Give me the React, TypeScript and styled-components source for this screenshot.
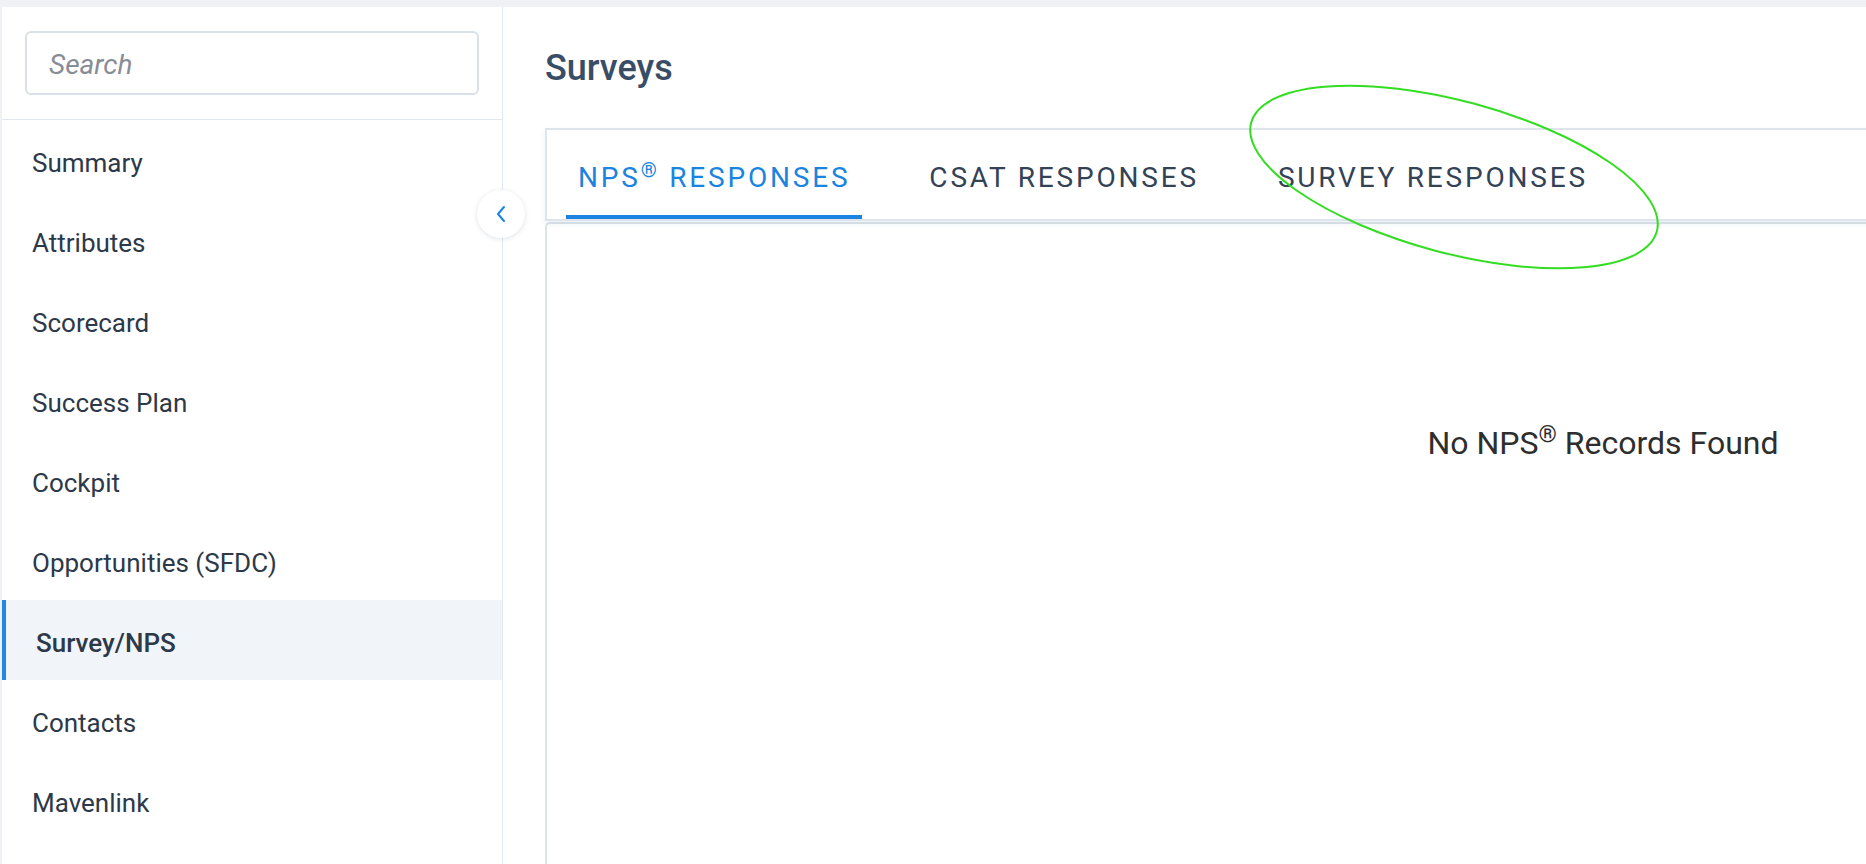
import styled, { createGlobalStyle } from "styled-components";

const GlobalStyle = createGlobalStyle`
    html, body {
        margin: 0;
        padding: 0;
        overflow: hidden;
        background: #eff1f5;
        font-family: Roboto, "Liberation Sans", sans-serif;
    }
    * {
        box-sizing: border-box;
    }
`;

const Page = styled.div`
    display: flex;
    align-items: stretch;
    width: max-content;
    min-height: 100vh;
    padding: 7px 0 0 2px;
    background: #eff1f5;
    position: relative;
`;

const Sidebar = styled.aside`
    position: relative;
    flex: none;
    width: 501px;
    background: #ffffff;
    border-right: 1px solid #e3e8ee;
`;

const SearchWrap = styled.div`
    padding: 24px 23px;
    border-bottom: 1px solid #e3e8ee;
`;

const SearchInput = styled.input`
    display: block;
    width: 100%;
    height: 64px;
    padding: 2px 22px 0;
    border: 2px solid #d9e0e8;
    border-radius: 6px;
    font-family: Roboto, "Liberation Sans", sans-serif;
    font-size: 28px;
    color: #2d3848;
    outline: none;
    &::placeholder {
        color: #878d96;
        font-style: italic;
    }
`;

const NavList = styled.ul`
    list-style: none;
    margin: 0;
    padding: 0;
`;

const NavItem = styled.li<{ $active?: boolean }>`
    display: flex;
    align-items: center;
    height: 80px;
    padding: 6px 0 0 30px;
    border-left: ${(p) => (p.$active ? "4px solid #1f87e5" : "none")};
    background: ${(p) => (p.$active ? "#f1f5f9" : "transparent")};
    font-size: 26px;
    font-weight: ${(p) => (p.$active ? 500 : 400)};
    color: #2d3848;
`;

const CollapseButton = styled.button`
    position: absolute;
    top: 183px;
    left: 475px;
    width: 48px;
    height: 48px;
    padding: 0;
    border: none;
    border-radius: 50%;
    background: #ffffff;
    box-shadow: 0 1px 5px rgba(30, 50, 80, 0.14);
    display: flex;
    align-items: center;
    justify-content: center;
    cursor: pointer;
    z-index: 2;
`;

const Main = styled.main`
    flex: none;
    background: #ffffff;
    padding: 39px 0 0 42px;
`;

const Heading = styled.h1`
    margin: 0 0 38px;
    font-size: 36px;
    line-height: 44px;
    font-weight: 500;
    color: #3a4d66;
`;

const Card = styled.section`
    width: 2114px;
`;

const TabBar = styled.div`
    position: relative;
    z-index: 1;
    display: flex;
    gap: 55px;
    padding-left: 19px;
    background: #ffffff;
    border: 2px solid #dde4ec;
    border-right: none;
    box-shadow: 0 3px 6px rgba(40, 60, 90, 0.08);
`;

const Tab = styled.div<{ $active?: boolean }>`
    height: 89px;
    padding: 32px 12px 0;
    font-size: 28px;
    line-height: 32px;
    letter-spacing: 2.8px;
    text-transform: uppercase;
    white-space: nowrap;
    color: ${(p) => (p.$active ? "#1a84e0" : "#344256")};
    border-bottom: 4px solid ${(p) => (p.$active ? "#1a84e0" : "transparent")};
`;

const Reg = styled.sup`
    font-size: 0.73em;
    line-height: 0;
    vertical-align: super;
`;

const Panel = styled.div`
    margin-top: 1px;
    min-height: 700px;
    padding-top: 199px;
    border: 2px solid #dde4ec;
    border-right: none;
    border-bottom: none;
    border-radius: 5px 0 0 0;
    text-align: center;
`;

const EmptyText = styled.div`
    font-size: 32px;
    line-height: 40px;
    color: #2e2e2e;
`;

const Annotation = styled.svg`
    position: absolute;
    left: 0;
    top: 0;
    width: 1866px;
    height: 864px;
    pointer-events: none;
    z-index: 5;
`;

const navItems = [
    "Summary",
    "Attributes",
    "Scorecard",
    "Success Plan",
    "Cockpit",
    "Opportunities (SFDC)",
    "Survey/NPS",
    "Contacts",
    "Mavenlink",
];

export default function App() {
    return (
        <>
            <GlobalStyle />
            <Page>
                <Sidebar>
                    <SearchWrap>
                        <SearchInput placeholder="Search" />
                    </SearchWrap>
                    <NavList>
                        {navItems.map((item) => (
                            <NavItem key={item} $active={item === "Survey/NPS"}>
                                {item}
                            </NavItem>
                        ))}
                    </NavList>
                    <CollapseButton aria-label="Collapse">
                        <svg width="12" height="18" viewBox="0 0 12 18">
                            <polyline
                                points="9,2 3,9 9,16"
                                fill="none"
                                stroke="#1a84e0"
                                strokeWidth="2"
                                strokeLinecap="round"
                                strokeLinejoin="round"
                            />
                        </svg>
                    </CollapseButton>
                </Sidebar>
                <Main>
                    <Heading>Surveys</Heading>
                    <Card>
                        <TabBar>
                            <Tab $active>
                                NPS<Reg>®</Reg> Responses
                            </Tab>
                            <Tab>CSAT Responses</Tab>
                            <Tab>Survey Responses</Tab>
                        </TabBar>
                        <Panel>
                            <EmptyText>
                                No NPS<Reg>®</Reg> Records Found
                            </EmptyText>
                        </Panel>
                    </Card>
                </Main>
                <Annotation viewBox="0 0 1866 864">
                    <ellipse
                        cx="1454"
                        cy="177"
                        rx="210"
                        ry="76"
                        transform="rotate(15 1454 177)"
                        fill="none"
                        stroke="#33dd22"
                        strokeWidth="2"
                    />
                </Annotation>
            </Page>
        </>
    );
}
